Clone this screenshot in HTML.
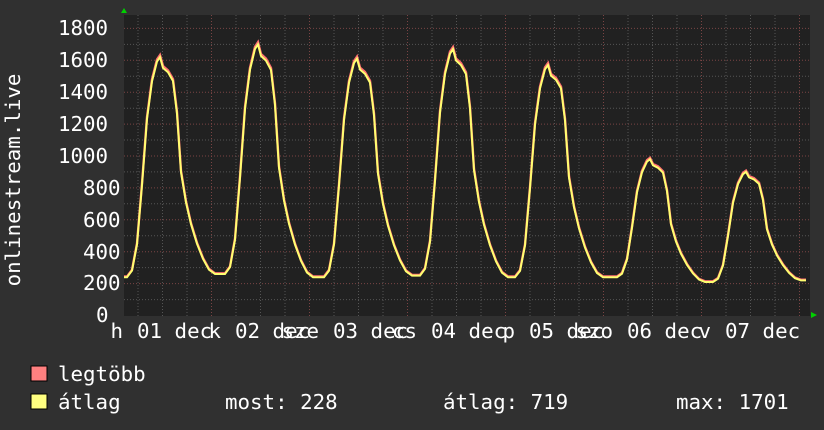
<!DOCTYPE html>
<html><head><meta charset="utf-8"><style>
html,body{margin:0;padding:0;background:#303030;width:824px;height:430px;overflow:hidden}
body{position:relative;font-family:"DejaVu Sans Mono","Liberation Mono",monospace;color:#fff;font-size:20.8px}
.t{position:absolute;white-space:pre;line-height:1}
</style></head><body>
<svg id="g" width="824" height="430" style="position:absolute;left:0;top:0">
<rect x="124" y="15" width="686" height="301" fill="#212121"/>
<g id="grid"></g>
<path id="mx" fill="none" stroke="#ff7070" stroke-width="2.4"/>
<path id="av" fill="none" stroke="#ffff70" stroke-width="2"/>
<polygon points="121,13 127,13 124,8" fill="#00d000"/>
<polygon points="811,312 811,318 817,315" fill="#00d000"/>
<rect x="31" y="366" width="16" height="15" fill="#ff8080" stroke="#000"/>
<rect x="31" y="394" width="16" height="15" fill="#ffff80" stroke="#000"/>
<text x="20" y="180" transform="rotate(-90 20 180)" text-anchor="middle" fill="#fff" font-family="DejaVu Sans Mono, monospace" font-size="20.8">onlinestream.live</text>
</svg>
<div class="t" style="left:58px;top:18px">1800</div>
<div class="t" style="left:58px;top:50px">1600</div>
<div class="t" style="left:58px;top:82px">1400</div>
<div class="t" style="left:58px;top:114px">1200</div>
<div class="t" style="left:58px;top:146px">1000</div>
<div class="t" style="left:83px;top:178px">800</div>
<div class="t" style="left:83px;top:210px">600</div>
<div class="t" style="left:83px;top:242px">400</div>
<div class="t" style="left:83px;top:273px">200</div>
<div class="t" style="left:96px;top:305px">0</div>
<div id="xl"></div>
<div class="t" style="left:58px;top:364px">legtöbb</div>
<div class="t" style="left:58px;top:392px">átlag</div>
<div class="t" style="left:225px;top:392px">most: 228</div>
<div class="t" style="left:443px;top:392px">átlag: 719</div>
<div class="t" style="left:676px;top:392px">max: 1701</div>
<script>
var g=document.getElementById('grid'),s='';
function Y(v){return 315.5-v*0.1595;}
for(var v=100;v<=1800;v+=100){var y=Y(v).toFixed(1);s+='<line x1="124" x2="810" y1="'+y+'" y2="'+y+'" stroke="'+(v%200?'#555':'#7a4444')+'" stroke-dasharray="1,2"/>';}
for(var x=138;x<810;x+=24.5){var r=((x-211)%98+98)%98;var maj=r<2||r>96;s+='<line y1="15" y2="316" x1="'+x.toFixed(1)+'" x2="'+x.toFixed(1)+'" stroke="'+(maj?'#7a4444':'#555')+'" stroke-dasharray="1,2"/>';}
g.innerHTML=s;
var peaks=[[160,1620],[258,1700],[357,1610],[453,1670],[548,1570],[650,980],[746,900]];
var tr=[240,260,240,250,240,240,210,220];
var off=[[-33,0],[-28,.03],[-23,.15],[-18,.42],[-13,.72],[-8,.89],[-3,.98],[0,1],[3,.95],[8,.93],[13,.89],[17,.74],[21,.47],[26,.33],[31,.23],[37,.14],[43,.07],[49,.02],[55,0]];
var pts=[[124,tr[0]]];
peaks.forEach(function(p,i){off.forEach(function(o){var base=o[0]<=0?tr[i]:tr[i+1];var x=p[0]+o[0];if(x<125)return;var v=base+(p[1]-base)*o[1];pts.push([x,v]);});});
pts.push([806,220]);
var a='',m='';
pts.forEach(function(q,i){var c=i?'L':'M';a+=c+q[0]+','+Y(q[1]).toFixed(1);m+=c+q[0]+','+(Y(q[1]*1.006+3)).toFixed(1);});
document.getElementById('av').setAttribute('d',a);
document.getElementById('mx').setAttribute('d',m);
var xl='',dn=['h','k','sze','cs','p','szo','v'];
for(var d=0;d<7;d++){var x=137+98*d;xl+='<div class="t" style="left:'+x+'px;top:321px">0'+(d+1)+' dec</div>';
var w=dn[d].length*12.5;xl+='<div class="t" style="left:'+(123+98*d-w)+'px;top:321px">'+dn[d]+'</div>';}
document.getElementById('xl').innerHTML=xl;
</script>
</body></html>
